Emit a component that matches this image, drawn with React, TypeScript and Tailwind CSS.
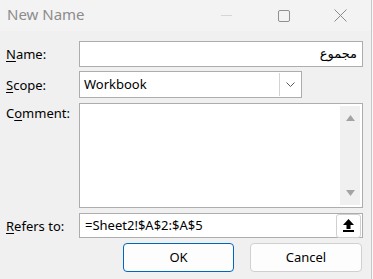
import React from "react";

const font = { fontFamily: '"Noto Sans", "DejaVu Sans", sans-serif' };

function Label({ pre, u, post }: { pre?: string; u: string; post: string }) {
  return (
    <div className="w-[79px] shrink-0 pl-[6px] text-[13px] text-black leading-[18px]">
      {pre}
      <span className="underline underline-offset-2">{u}</span>
      {post}
    </div>
  );
}

export default function App() {
  return (
    <div className="w-[373px] h-[279px] bg-white flex" style={font}>
      <div className="w-[371px] h-[279px] bg-[#f0f0f0] flex flex-col">
        {/* title bar */}
        <div className="h-[31px] bg-[#f3f3f3] flex items-center justify-between">
          <div className="pl-[7px] text-[15px] text-[#8c8c8c] leading-none pb-[3px]">New Name</div>
          <div className="flex items-center h-full">
            <div className="w-[46px] h-full flex items-center justify-center">
              <div className="w-[11px] h-px bg-[#d6d6d6]" />
            </div>
            <div className="w-[12px]" />
            <div className="w-[46px] h-full flex items-center justify-center">
              <div className="w-[12px] h-[12px] border border-[#8f8f8f] rounded-[2px]" />
            </div>
            <div className="w-[12px]" />
            <div className="w-[46px] h-full flex items-center justify-center pr-[4px]">
              <svg width="13" height="13" viewBox="0 0 13 13">
                <path d="M0.5 0.5 L12.5 12.5 M12.5 0.5 L0.5 12.5" stroke="#8a8a8a" strokeWidth="1" />
              </svg>
            </div>
            <div className="w-[6px]" />
          </div>
        </div>

        <div className="flex flex-col pt-[10px]">
          {/* Name */}
          <div className="flex items-center">
            <Label u="N" post="ame:" />
            <div className="w-[284px] h-[26px] bg-white border border-[#adadad] flex items-center justify-end pr-[5px]">
              <span dir="rtl" className="text-[13px] text-black">مجموع</span>
            </div>
          </div>

          {/* Scope */}
          <div className="flex items-center mt-[4px]">
            <Label u="S" post="cope:" />
            <div className="w-[223px] h-[27px] bg-white border border-[#adadad] flex items-center">
              <div className="flex-1 pl-[4px] text-[13px] text-black">Workbook</div>
              <div className="w-[21px] h-[23px] mr-px border-l border-[#d4d4d4] flex items-center justify-center">
                <svg width="9" height="5" viewBox="0 0 9 5">
                  <path d="M0.5 0.5 L4.5 4.5 L8.5 0.5" stroke="#5a5a5a" strokeWidth="1" fill="none" />
                </svg>
              </div>
            </div>
          </div>

          {/* Comment */}
          <div className="flex items-start mt-[5px]">
            <div className="pt-[1px]">
              <Label pre="C" u="o" post="mment:" />
            </div>
            <div className="w-[284px] h-[105px] bg-white border border-[#adadad] flex justify-end">
              <div className="w-[20px] my-[2px] mr-[2px] bg-[#f0f0f0] flex flex-col items-center justify-between py-[9px]">
                <svg width="9" height="6" viewBox="0 0 9 6">
                  <path d="M4.5 0 L9 6 L0 6 Z" fill="#a3a3a3" />
                </svg>
                <svg width="9" height="6" viewBox="0 0 9 6">
                  <path d="M0 0 L9 0 L4.5 6 Z" fill="#a3a3a3" />
                </svg>
              </div>
            </div>
          </div>

          {/* Refers to */}
          <div className="flex items-center mt-[5px]">
            <Label u="R" post="efers to:" />
            <div className="w-[284px] h-[25px] bg-white border border-[#adadad] flex items-center">
              <div className="flex-1 pl-[5px] text-[13px] text-black">=Sheet2!$A$2:$A$5</div>
              <div className="w-[25px] h-[24px] mr-px bg-white border border-[#d0d0d0] rounded-[3px] flex items-center justify-center">
                <svg width="11" height="13" viewBox="0 0 11 13">
                  <path d="M5.5 0 L11 6 L7.5 6 L7.5 10 L3.5 10 L3.5 6 L0 6 Z" fill="#000" />
                  <rect x="0" y="11" width="11" height="2" fill="#000" />
                </svg>
              </div>
            </div>
          </div>

          {/* Buttons */}
          <div className="flex mt-[5px] pl-[123px] gap-[16px]">
            <div className="w-[111px] h-[29px] bg-[#fdfdfd] border border-[#0067c0] rounded-[4px] flex items-center justify-center text-[13px] text-black">
              OK
            </div>
            <div className="w-[112px] h-[29px] bg-[#fdfdfd] border border-[#d0d0d0] rounded-[4px] flex items-center justify-center text-[13px] text-black">
              Cancel
            </div>
          </div>
        </div>
      </div>
      <div className="w-px h-full bg-[#c8c8c8]" />
      <div className="w-px h-full bg-[#f7f7f7]" />
    </div>
  );
}
